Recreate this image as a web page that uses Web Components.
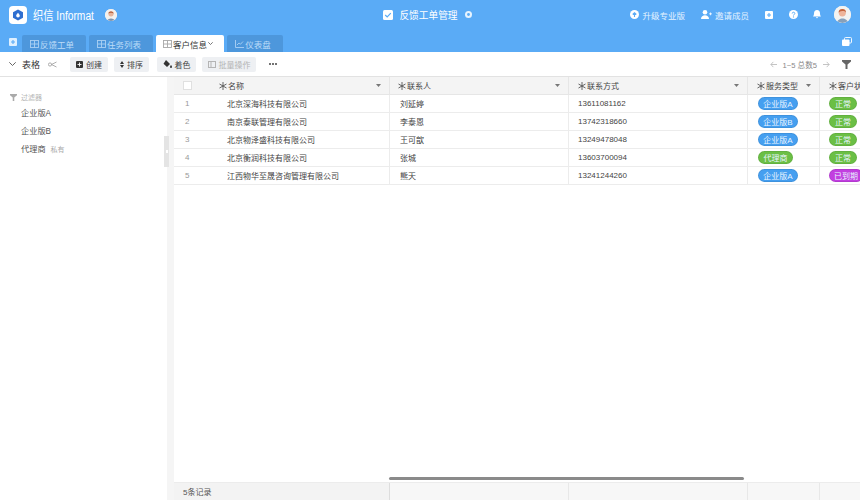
<!DOCTYPE html>
<html lang="zh"><head><meta charset="utf-8"><title>反馈工单管理</title>
<style>
html,body{margin:0;height:100%;overflow:hidden}
body{font:9px "Liberation Sans","Noto Sans CJK SC",sans-serif;color:#444;background:#fff}
app-shell{width:860px;height:500px}
</style></head><body>
<app-shell></app-shell>
<script>
const I={
 grid:'<svg width="9" height="8" viewBox="0 0 9 8" fill="none" stroke="currentColor" stroke-width=".9"><rect x=".5" y=".5" width="8" height="7"/><path d="M.5 4h8M4.5.5v7"/></svg>',
 chart:'<svg width="9" height="8" viewBox="0 0 9 8" fill="none" stroke="currentColor" stroke-width=".9"><path d="M.5 0v7.5H9M2 5l2-2 1.500 1.200L8 1.500"/></svg>',
 star:'<svg style="flex:none" width="8" height="8" viewBox="0 0 8 8" stroke="#555" stroke-width=".9"><path d="M4 0v8M.5 2l7 4M7.500 2l-7 4"/></svg>',
 caret:'<svg width="5" height="3" viewBox="0 0 5 3" fill="#777"><path d="M0 0h5L2.500 3z"/></svg>',
 filter:'<svg width="100%" height="100%" viewBox="0 0 9 9" fill="currentColor"><path d="M0 0h9v1.500L5.500 4.500V9h-2V4.500L0 1.500z"/></svg>'
};
function def(name,css,html){
 customElements.define(name,class extends HTMLElement{
  constructor(){super();this.attachShadow({mode:'open'}).innerHTML='<style>'+css+'</style>'+(typeof html==='function'?html(this):html)}
 })
}
def('top-bar',`:host{display:grid;grid-template-columns:1fr auto 1fr;align-items:center;height:29px;color:#fff}
 .l,.r{display:flex;align-items:center}
 .l{padding-left:9px}
 .logo{width:18px;height:18px;background:#fff;border-radius:4px;display:flex;align-items:center;justify-content:center}
 .brand{font-size:12.500px;margin-left:6px;transform:scaleX(.82);transform-origin:left center;white-space:nowrap;width:62px;display:inline-block}
 .c{display:flex;align-items:center;gap:6px;font-size:9.700px;padding-right:5px}
 .r{justify-content:flex-end;font-size:8.500px;padding-right:9px;color:#e4f2ff}
 .it{display:flex;align-items:center;gap:3px;white-space:nowrap}
 .avatar{border-radius:50%;background:#f2f2f2;overflow:hidden;display:block}`,
 `<div class="l"><span class="logo"><svg width="12" height="12" viewBox="0 0 12 12"><path d="M6 .5l5 2.800v5.400L6 11.500 1 8.700V3.300z" fill="#2f6fd0"/><path d="M6 3.800c1.200 1.300 1.800 2.100 1.800 3A1.800 1.800 0 0 1 4.200 6.800c0-.9.600-1.700 1.800-3z" fill="#fff"/></svg></span>
 <span class="brand">织信 Informat</span>
 <svg class="avatar" style="margin-left:10px" width="12" height="12" viewBox="0 0 12 12"><rect width="12" height="12" fill="#f4f1ee"/><circle cx="6" cy="4.800" r="2.600" fill="#e8b49a"/><path d="M3.400 4.400C3.600 2 8.400 2 8.600 4.400 7 3.400 5 3.400 3.400 4.400z" fill="#b5613d"/><path d="M2 12c.4-3.500 7.600-3.500 8 0z" fill="#7d93ad"/></svg></div>
 <div class="c"><svg width="10" height="10" viewBox="0 0 10 10"><rect width="10" height="10" rx="1.500" fill="#fff"/><path d="M2.200 5l2 2 3.600-3.800" fill="none" stroke="#5aabf6" stroke-width="1.200"/></svg><span>反馈工单管理</span>
 <svg width="7" height="7" viewBox="0 0 8 8" style="margin-left:1px"><circle cx="4" cy="4" r="4" fill="#fff" opacity=".85"/><circle cx="4" cy="4" r="1.600" fill="#5aabf6"/></svg></div>
 <div class="r">
 <span class="it"><svg width="9" height="9" viewBox="0 0 9 9"><circle cx="4.500" cy="4.500" r="4.500" fill="#fff"/><path d="M4.500 7V3M2.700 4.500l1.800-1.800 1.800 1.800" fill="none" stroke="#5aabf6" stroke-width="1.100"/></svg>升级专业版</span>
 <span class="it" style="margin-left:16px"><svg width="11" height="9" viewBox="0 0 11 9" fill="#fff"><circle cx="4" cy="2.300" r="2.300"/><path d="M0 9c0-5 8-5 8 0zM8 3.500h1V2.500h.8v1H11v.8H9.800v1H9v-1H8z"/></svg>邀请成员</span>
 <svg style="margin-left:16px" width="8" height="8" viewBox="0 0 8 8"><rect width="8" height="8" rx="1" fill="#fff"/><path d="M4 2v4M2 4h4" stroke="#5aabf6" stroke-width="1.100"/></svg>
 <svg style="margin-left:16px" width="9" height="9" viewBox="0 0 9 9"><circle cx="4.500" cy="4.500" r="4.500" fill="#fff"/><path d="M3.200 3.500c0-1.700 2.600-1.700 2.600 0 0 1-1.300 1-1.300 2" fill="none" stroke="#5aabf6" stroke-width="1"/><circle cx="4.500" cy="6.900" r=".6" fill="#5aabf6"/></svg>
 <svg style="margin-left:15px" width="8" height="9" viewBox="0 0 8 9" fill="#fff"><path d="M4 0c2 0 3 1.500 3 3.500 0 1.500.5 2.300 1 3H0c.5-.7 1-1.500 1-3C1 1.500 2 0 4 0zM3 7.300h2a1 1 0 0 1-2 0z"/></svg>
 <svg class="avatar" style="margin-left:13px" width="17" height="17" viewBox="0 0 17 17"><rect width="17" height="17" fill="#f3f3f1"/><circle cx="8.300" cy="6.800" r="3.600" fill="#eeb49a"/><path d="M4.600 6.400C4.400 1.800 12.400 1.800 12 6.400 10.500 4.600 7 4.800 4.600 6.400z" fill="#c5643c"/><path d="M3 17c.5-6 10.500-6 11 0z" fill="#87a0ba"/></svg></div>`);
def('tab-item',`:host{display:flex;align-items:center;justify-content:center;gap:1px;height:17px;padding-right:4px;border-radius:2px 2px 0 0;background:#4d97dc;color:#bcdcf8;font-size:8.500px;box-sizing:border-box;white-space:nowrap}
 :host([active]){background:#fff;color:#333}
 span{display:flex;opacity:.85}
 :host([active]) span{color:#999}`,t=>`<span>${t.getAttribute('icon')==='chart'?I.chart:I.grid}</span><slot></slot>`);
def('tab-bar',`:host{display:flex;align-items:flex-end;height:23px;position:relative}
 .add{margin:0 5px 6px 9px;width:8px;height:8px;display:flex}
 .tabs{display:flex;gap:3px}
 .end{margin:0 8px 6px auto;display:flex;color:#fff}`,
 `<span class="add"><svg width="8" height="8" viewBox="0 0 8 8"><rect width="8" height="8" rx="1" fill="#dff0ff"/><path d="M4 2v4M2 4h4" stroke="#5aabf6" stroke-width="1.100"/></svg></span>
 <div class="tabs"><tab-item style="width:64px">反馈工单</tab-item><tab-item style="width:64px">任务列表</tab-item><tab-item active style="width:68px">客户信息 <svg width="5" height="3" viewBox="0 0 5 3" fill="none" stroke="#555" stroke-width=".8"><path d="M.3.300L2.500 2.500 4.700.3"/></svg></tab-item><tab-item icon="chart" style="width:56px">仪表盘</tab-item></div>
 <span class="end"><svg width="10" height="9" viewBox="0 0 10 9"><rect x="2.500" y=".5" width="7" height="5.500" rx="1" fill="none" stroke="#fff" stroke-width=".9"/><rect x="0" y="2.500" width="7.500" height="6.500" rx="1" fill="#fff"/></svg></span>`);
def('tool-btn',`:host{display:flex;align-items:center;justify-content:center;gap:3px;height:15px;background:#eef0f3;border-radius:2px;font-size:8px;color:#444;white-space:nowrap}
 :host([disabled]){color:#b4b4b4}`,`<slot name="i"></slot><slot></slot>`);
def('tool-bar',`:host{display:flex;align-items:center;height:24px;border-bottom:1px solid #e2e2e2;background:#fff}
 .t{font-size:9px;margin-left:6px;color:#333}
 .b{display:flex;margin-left:13px}
 .more{margin-left:13px;display:flex;gap:1px}.more i{width:2px;height:2px;background:#444;border-radius:50%}
 .p{margin-left:auto;display:flex;align-items:center;color:#888;font-size:7.600px;padding-right:9px}
 .p svg.ar{margin:0 6px}
 .fl{display:flex;width:9px;height:9px;margin-left:6px;color:#666}`,
 `<svg style="margin-left:9px" width="7" height="4" viewBox="0 0 7 4" fill="none" stroke="#555" stroke-width=".9"><path d="M.3.300L3.500 3.500 6.700.3"/></svg>
 <span class="t">表格</span>
 <svg style="margin-left:8px" width="9" height="7" viewBox="0 0 9 7" fill="none" stroke="#999" stroke-width=".8"><circle cx="2" cy="3.500" r="1.600"/><path d="M3.500 3.500L8.500 1M3.500 3.500L8.500 6"/></svg>
 <div class="b">
 <tool-btn style="width:38px"><svg slot="i" width="7" height="7" viewBox="0 0 7 7"><rect width="7" height="7" rx="1" fill="#333"/><path d="M3.500 1.500v4M1.500 3.500h4" stroke="#fff" stroke-width=".9"/></svg>创建</tool-btn>
 <tool-btn style="width:35px;margin-left:6px"><svg slot="i" width="4" height="7" viewBox="0 0 4 7" fill="#333"><path d="M2 0l2 3H0zM2 7L0 4h4z"/></svg>排序</tool-btn>
 <tool-btn style="width:39px;margin-left:8px"><svg slot="i" width="9" height="8" viewBox="0 0 9 8" fill="#333"><path d="M3 0l4 4-3 3-3.500-3.200zM8 5c.6.900 1 1.400 1 2a1 1 0 0 1-2 0c0-.6.400-1.100 1-2z"/></svg>着色</tool-btn>
 <tool-btn disabled style="width:54px;margin-left:6px"><svg slot="i" width="8" height="7" viewBox="0 0 8 7" fill="none" stroke="#b4b4b4"><rect x=".5" y=".5" width="7" height="6"/><path d="M3 .5v6"/></svg>批量操作</tool-btn></div>
 <span class="more"><i></i><i></i><i></i></span>
 <div class="p"><svg class="ar" width="7" height="7" viewBox="0 0 8 7" fill="none" stroke="#bbb"><path d="M8 3.500H1M3.800.5L1 3.500l2.800 3"/></svg>1~5 总数5<svg class="ar" width="7" height="7" viewBox="0 0 8 7" fill="none" stroke="#bbb"><path d="M0 3.500h7M4.200.5L7 3.500l-2.800 3"/></svg><span class="fl">${I.filter}</span></div>`);
def('side-panel',`:host{display:block;width:167px;flex:none;background:#fff;padding-top:15px;box-sizing:border-box;position:relative;font-size:8.200px;color:#555}
 .h{display:flex;align-items:center;gap:4px;height:10px;padding-left:10px;color:#b5b5b5;font-size:7px}
 .h span{display:flex;width:7px;height:7px;color:#aaa}
 ul{list-style:none;margin:3px 0 0;padding:0 0 0 21px}
 li{height:18px;line-height:18px;white-space:nowrap}
 small{font-size:7px;color:#aaa;margin-left:5px}
 .grip{position:absolute;right:-2px;top:59px;width:5px;height:31px;background:#e4e4e4;display:flex;align-items:center;justify-content:center}
 .grip i{width:2px;height:3px;background:#fff}`,
 `<div class="h"><span>${I.filter}</span>过滤器</div><ul><li>企业版A</li><li>企业版B</li><li>代理商<small>私有</small></li></ul><span class="grip"><i></i></span>`);
def('status-pill',`:host{display:inline-flex;align-items:center;justify-content:center;height:13px;border-radius:7px;color:#e8f4ff;font-size:8px;background:var(--c);box-sizing:border-box;border:1px solid rgba(0,0,0,.08);white-space:nowrap;flex:none}`,`<slot></slot>`);
const COLS='216px 179px 179px 72px 1fr';
def('h-cell',`:host{display:flex;align-items:center;gap:1px;font-size:8px;color:#444;border-right:1px solid #e6e6e6;box-sizing:border-box;padding:0 8px 0 var(--pl,8px);white-space:nowrap;overflow:hidden}
 .c{margin-left:auto;display:flex}`,t=>`${I.star}<slot></slot>${t.hasAttribute('nocaret')?'':'<span class="c">'+I.caret+'</span>'}`);
def('data-row',`:host{display:grid;grid-template-columns:${COLS};height:18px;border-bottom:1px solid #ececec;box-sizing:border-box;font-size:8px;color:#444;white-space:nowrap}
 div{display:flex;align-items:center;border-right:1px solid #ececec;box-sizing:border-box;overflow:hidden;padding-bottom:1px}
 .n{color:#999;padding-left:11px}.n b{font-weight:400;width:42px;flex:none}
 .p{padding-left:9px}.k{padding-left:10px}.s{padding-left:10px}.u{border:0;padding-left:9px}
 .nm{color:#444}`,t=>{
 const a=k=>t.getAttribute(k);
 const colors={'企业版A':'#459ff0','企业版B':'#459ff0','代理商':'#6bbf45','正常':'#6bbf45','已到期':'#c23fe0'};
 const w={'代理商':35}[a('svc')]||40;
 return `<div class="n"><b>${a('i')}</b><span class="nm">${a('name')}</span></div><div class="k">${a('who')}</div><div class="p">${a('tel')}</div>
 <div class="s"><status-pill style="--c:${colors[a('svc')]};width:${w}px">${a('svc')}</status-pill></div>
 <div class="u"><status-pill style="--c:${colors[a('st')]};width:${a('st')==='正常'?28:34}px">${a('st')}</status-pill></div>`});
def('data-table',`:host{flex:1;min-width:0;display:flex;flex-direction:column;background:#fff;position:relative;overflow:hidden;margin-left:7px}
 .head{display:grid;grid-template-columns:${COLS};height:18px;background:#f4f4f4;border-bottom:1px solid #e6e6e6;box-sizing:border-box;flex:none}
 .cb{width:9px;height:9px;background:#fff;border:1px solid #e0e0e0;box-sizing:border-box;position:absolute;left:9px;top:4px}
 .first{position:relative}
 .body{flex:1}
 .foot{display:grid;grid-template-columns:${COLS};height:18px;background:#f7f7f7;border-top:1px solid #ececec;box-sizing:border-box;font-size:8px;color:#555;flex:none}
 .foot span{border-right:1px solid #e8e8e8;display:flex;align-items:center;padding:0 0 1px 9px}
 .foot span:first-child{background:#f3f3f3;border-right-color:#ddd}
 .foot span:last-child{border:0}
 .bar{position:absolute;left:215px;width:355px;bottom:20px;height:3px;border-radius:2px;background:#8a8a8a}`,
 `<div class="head"><h-cell class="first" style="--pl:45px"><span class="cb"></span>名称</h-cell><h-cell>联系人</h-cell><h-cell style="--pl:9px">联系方式</h-cell><h-cell style="--pl:9px">服务类型</h-cell><h-cell nocaret style="--pl:9px;border:0">客户状态</h-cell></div>
 <div class="body">
 <data-row i="1" name="北京深海科技有限公司" who="刘延婷" tel="13611081162" svc="企业版A" st="正常"></data-row>
 <data-row i="2" name="南京泰联管理有限公司" who="李泰恩" tel="13742318660" svc="企业版B" st="正常"></data-row>
 <data-row i="3" name="北京物泽盛科技有限公司" who="王可歆" tel="13249478048" svc="企业版A" st="正常"></data-row>
 <data-row i="4" name="北京衡润科技有限公司" who="张城" tel="13603700094" svc="代理商" st="正常"></data-row>
 <data-row i="5" name="江西物华至晟咨询管理有限公司" who="熊天" tel="13241244260" svc="企业版A" st="已到期"></data-row>
 </div>
 <div class="foot"><span>5条记录</span><span></span><span></span><span></span><span></span></div>
 <i class="bar"></i>`);
def('app-shell',`:host{display:flex;flex-direction:column;overflow:hidden}
 header{background:#5aabf6;height:52px;flex:none}
 .main{flex:1;min-height:0;display:flex;background:#f5f5f5}`,
 `<header><top-bar></top-bar><tab-bar></tab-bar></header><tool-bar></tool-bar><div class="main"><side-panel></side-panel><data-table></data-table></div>`);
</script></body></html>
